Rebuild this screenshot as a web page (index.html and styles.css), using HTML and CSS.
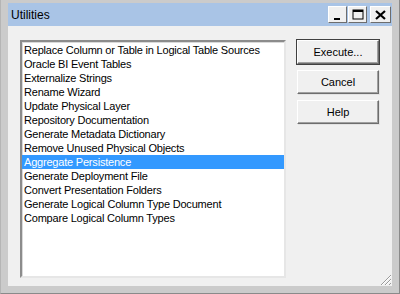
FILE: index.html
```html
<!DOCTYPE html>
<html lang="en">
<head>
  <meta charset="UTF-8">
  <title>Utilities</title>
  <link rel="stylesheet" href="styles.css">
</head>
<body>
  <div class="window">
    <div class="titlebar">
      <span class="title">Utilities</span>
      <div class="caption-buttons">
        <span class="cap-btn"><svg width="10" height="10" viewBox="0 0 10 10"><rect x="1" y="8" width="6" height="2" fill="#000"/></svg></span>
        <span class="cap-btn"><svg width="12" height="11" viewBox="0 0 12 11"><rect x="1" y="1" width="10" height="9" fill="none" stroke="#000" stroke-width="1"/><rect x="1" y="1" width="10" height="2" fill="#000"/></svg></span>
        <span class="cap-btn close"><svg width="11" height="10" viewBox="0 0 11 10"><path d="M1 1 L10 9 M10 1 L1 9" stroke="#000" stroke-width="2.2"/></svg></span>
      </div>
    </div>

    <div class="client">
      <!-- Utility list -->
      <ul class="list">
        <li>Replace Column or Table in Logical Table Sources</li>
        <li>Oracle BI Event Tables</li>
        <li>Externalize Strings</li>
        <li>Rename Wizard</li>
        <li>Update Physical Layer</li>
        <li>Repository Documentation</li>
        <li>Generate Metadata Dictionary</li>
        <li>Remove Unused Physical Objects</li>
        <li class="selected">Aggregate Persistence</li>
        <li>Generate Deployment File</li>
        <li>Convert Presentation Folders</li>
        <li>Generate Logical Column Type Document</li>
        <li>Compare Logical Column Types</li>
      </ul>

      <div class="actions">
        <button class="default">Execute...</button>
        <button>Cancel</button>
        <button>Help</button>
      </div>

      <svg class="grip" width="14" height="14" viewBox="0 0 14 14">
        <path d="M13 3 L3 13 M13 7 L7 13 M13 11 L11 13" stroke="#9a9a9a" stroke-width="1"/>
        <path d="M13 4 L4 13 M13 8 L8 13" stroke="#ffffff" stroke-width="1"/>
      </svg>
    </div>
  </div>
</body>
</html>
```

FILE: styles.css
```css
/* Classic Windows dialog */
body {
  margin: 0;
  background: #f0f0f0;
  font-family: "Liberation Sans", Arial, sans-serif;
}
.window {
  width: 400px;
  height: 294px;
  box-sizing: border-box;
  display: flex;
  flex-direction: column;
  padding: 3px 7px 7px 7px;
  background: #cbcbcb;
  border-top: 0;
  border-right: 1px solid #8a8a8a;
  border-bottom: 1px solid #8a8a8a;
  border-left: 1px solid #b5b5b5;
}
.titlebar {
  height: 23px;
  display: flex;
  align-items: center;
  justify-content: space-between;
  background: #a9c4e6;
  padding-left: 3px;
}
.title {
  font-size: 12px;
  color: #000;
}
.caption-buttons {
  display: flex;
  gap: 1px;
  margin-right: 1px;
}
.cap-btn {
  width: 19px;
  height: 17px;
  box-sizing: border-box;
  display: flex;
  align-items: center;
  justify-content: center;
  background: #f0f0f0;
  border: 1px solid;
  border-color: #fff #6d6d6d #6d6d6d #fff;
}
.cap-btn.close {
  margin-left: 2px;
  width: 21px;
}
.client {
  flex: 1;
  display: flex;
  align-items: flex-start;
  gap: 11px;
  padding: 14px 0 0 12px;
  background: #f0f0f0;
  position: relative;
}
.list {
  width: 266px;
  height: 238px;
  box-sizing: border-box;
  margin: 0;
  padding: 1px 0 0 0;
  list-style: none;
  background: #fff;
  border: 2px solid;
  border-color: #8c8c8c #e6e6e6 #e6e6e6 #8c8c8c;
  box-shadow: inset 1px 1px 0 #d9d9d9;
  font-size: 11px;
}
.list li {
  height: 14px;
  line-height: 14px;
  padding-left: 2px;
  color: #000;
  white-space: nowrap;
  overflow: hidden;
  letter-spacing: -0.2px;
}
.list li.selected {
  background: #3399ff;
  color: #fff;
}
.actions {
  display: flex;
  flex-direction: column;
  gap: 6px;
}
.actions button {
  width: 82px;
  height: 24px;
  margin: 0;
  background: #f0f0f0;
  border: 1px solid;
  border-color: #fff #6d6d6d #6d6d6d #fff;
  box-shadow: inset -1px -1px 0 #a0a0a0, 1px 1px 0 #e3e3e3;
  font-family: "Liberation Sans", Arial, sans-serif;
  font-size: 11px;
  color: #000;
  padding: 0;
}
.actions button.default {
  outline: 1px solid #404040;
}
.grip {
  position: absolute;
  right: 0;
  bottom: 0;
}
```
